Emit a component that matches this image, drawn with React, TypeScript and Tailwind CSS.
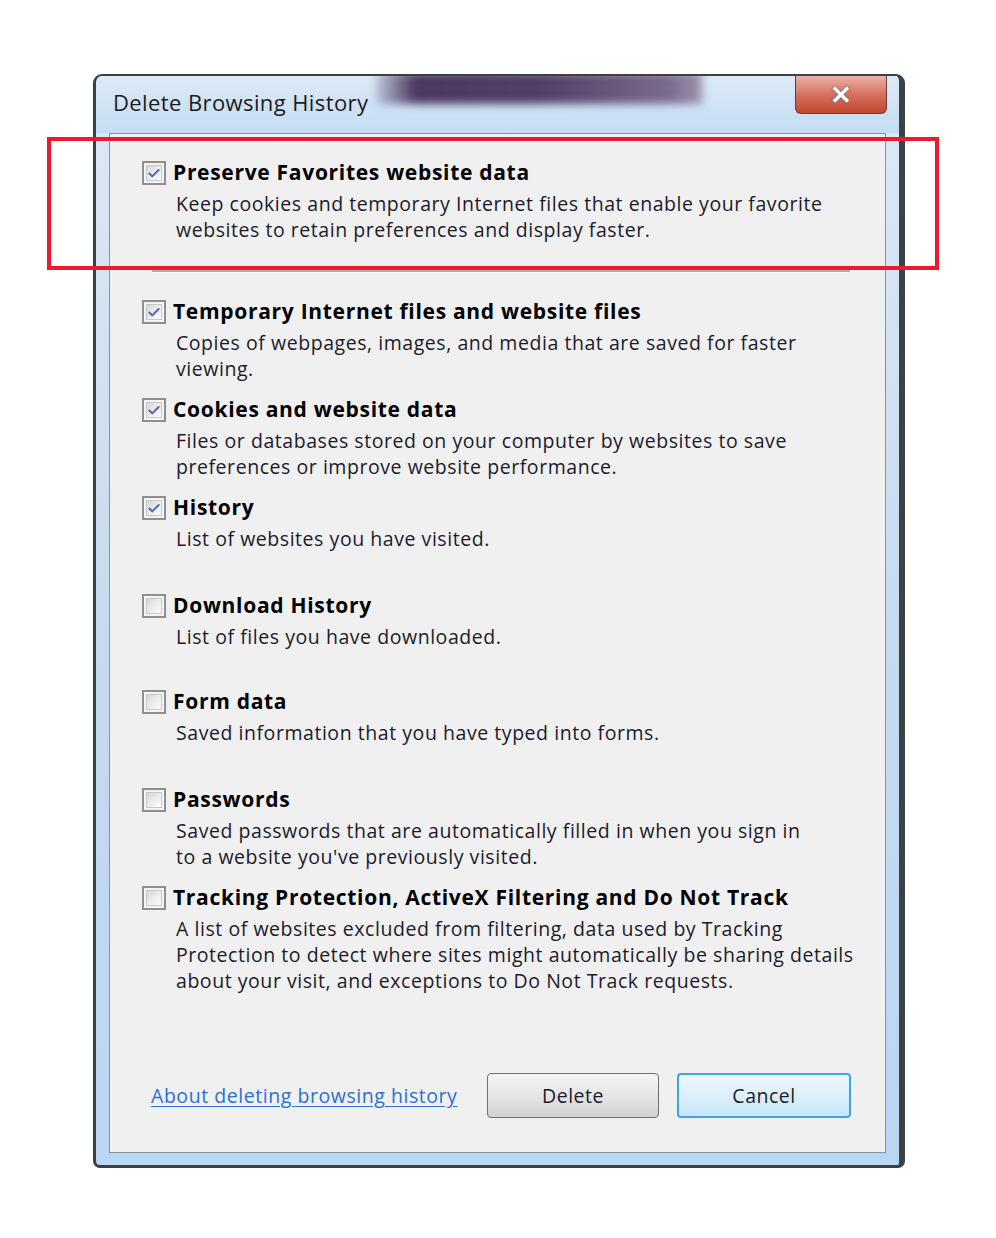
import { Check } from "lucide-react";

const items = [
  {
    label: "Temporary Internet files and website files",
    desc: ["Copies of webpages, images, and media that are saved for faster", "viewing."],
    checked: true,
    h: "h-[98px]",
  },
  {
    label: "Cookies and website data",
    desc: ["Files or databases stored on your computer by websites to save", "preferences or improve website performance."],
    checked: true,
    h: "h-[98px]",
  },
  { label: "History", desc: ["List of websites you have visited."], checked: true, h: "h-[98px]" },
  { label: "Download History", desc: ["List of files you have downloaded."], checked: false, h: "h-[96px]" },
  { label: "Form data", desc: ["Saved information that you have typed into forms."], checked: false, h: "h-[98px]" },
  {
    label: "Passwords",
    desc: ["Saved passwords that are automatically filled in when you sign in", "to a website you've previously visited."],
    checked: false,
    h: "h-[98px]",
  },
  {
    label: "Tracking Protection, ActiveX Filtering and Do Not Track",
    desc: [
      "A list of websites excluded from filtering, data used by Tracking",
      "Protection to detect where sites might automatically be sharing details",
      "about your visit, and exceptions to Do Not Track requests.",
    ],
    checked: false,
    h: "h-[98px]",
  },
];

function CheckBox({ checked }: { checked: boolean }) {
  return (
    <div className="w-[24px] h-[24px] border-2 border-[#8f8f8f] bg-[#f4f4f4] p-[2px] shrink-0">
      <div className="w-full h-full border border-[#c9c9c9] bg-gradient-to-br from-[#d6d6d6] via-[#ececec] to-[#fbfbfb] flex items-center justify-center">
        {checked && <Check size={17} strokeWidth={3.4} className="text-[#5066ad]" />}
      </div>
    </div>
  );
}

function Option({ label, desc, checked }: { label: string; desc: string[]; checked: boolean }) {
  return (
    <div className="flex">
      <div className="pt-[3px]">
        <CheckBox checked={checked} />
      </div>
      <div className="ml-[7px]">
        <div className="h-[30px] leading-[29px] text-[21px] font-bold text-black tracking-[0.7px] whitespace-nowrap">{label}</div>
        <div className="mt-[3px] pl-[3px] text-[19.5px] leading-[26px] tracking-[0.55px] text-[#1b1b2b] whitespace-nowrap">
          {desc.map((d) => (
            <div key={d}>{d}</div>
          ))}
        </div>
      </div>
    </div>
  );
}

export default function App() {
  return (
    <div
      className="relative w-[996px] h-[1238px] bg-white pl-[93px] pt-[74px]"
      style={{ fontFamily: '"Open Sans", "Noto Sans", sans-serif' }}
    >
      <div className="w-[812px] h-[1094px] rounded-t-[9px] rounded-b-[7px] border-t-2 border-l-[3px] border-b-[3px] border-r-[6px] border-[#3c4146] bg-gradient-to-b from-[#dde9f6] via-[#c6dbef] to-[#b9d6f3] flex flex-col overflow-hidden">
        <div className="relative h-[57px] flex items-start shrink-0 bg-gradient-to-b from-[#dce9f6] to-[#c4ddf4]">
          <div className="absolute left-[280px] top-[-4px] w-[326px] h-[32px] blur-[4px] bg-[linear-gradient(90deg,rgba(90,70,110,0.2)_0%,#4d3862_12%,#523e67_50%,#7b6b8b_90%,#9d92ad_100%)]" />
          <div className="relative ml-[17px] mt-[10px] text-[22px] tracking-[0.4px] text-[#1c1c1c]">Delete Browsing History</div>
          <div className="ml-auto mr-[12px] w-[92px] h-[38px] rounded-b-[6px] border border-t-0 border-[#6e3b33] bg-gradient-to-b from-[#eab2a8] via-[#d6715f] to-[#c2452f] flex items-center justify-center">
            <span
              className="text-[26px] font-bold text-white leading-none mt-[-2px]"
              style={{ textShadow: "0 0 1px #555, 0 0 2px #555" }}
            >
              ✕
            </span>
          </div>
        </div>
        <div className="mx-[13px] mb-[12px] flex-1 border border-[#8393a3] bg-[#f0f0f0] flex flex-col pt-[24px]">
          <div className="ml-[32px]">
            <Option
              label="Preserve Favorites website data"
              desc={[
                "Keep cookies and temporary Internet files that enable your favorite",
                "websites to retain preferences and display faster.",
              ]}
              checked
            />
          </div>
          <div className="ml-[42px] mr-[35px] mt-[27px] h-[3px] border-t-2 border-[#adadad] border-b border-b-white" />
          <div className="ml-[32px] mt-[24px] flex flex-col">
            {items.map((it) => (
              <div key={it.label} className={it.h}>
                <Option label={it.label} desc={it.desc} checked={it.checked} />
              </div>
            ))}
          </div>
          <div className="mt-[92px] flex items-center pl-[41px] pr-[34px]">
            <span className="text-[19.5px] tracking-[0.55px] text-[#2a6fd3] underline underline-offset-[3px]">
              About deleting browsing history
            </span>
            <button className="ml-auto w-[172px] h-[45px] rounded-[4px] border border-[#707070] bg-gradient-to-b from-[#f3f3f3] via-[#e6e6e6] to-[#d1d1d1] text-[19.5px] tracking-[0.5px] text-[#1b1b2b]">
              Delete
            </button>
            <button className="ml-[18px] w-[174px] h-[45px] rounded-[4px] border-2 border-[#3fa5e2] bg-gradient-to-b from-[#eef7fd] via-[#dcf0fc] to-[#c6e6f9] text-[19.5px] tracking-[0.5px] text-[#1b1b2b]">
              Cancel
            </button>
          </div>
        </div>
      </div>
      <div className="absolute left-[47px] top-[137px] w-[892px] h-[133px] border-[4px] border-[#ea1b2e]" />
    </div>
  );
}
